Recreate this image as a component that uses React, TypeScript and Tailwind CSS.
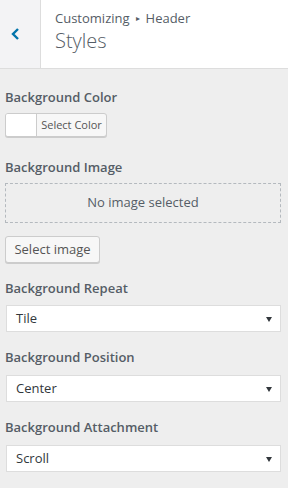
const font = { fontFamily: '"Open Sans", "Noto Sans", sans-serif' };

const Label = ({ children }: { children: React.ReactNode }) => (
  <div className="text-[13px] font-semibold leading-[18px] text-[#555d66]">{children}</div>
);

const SelectBox = ({ value }: { value: string }) => (
  <div className="flex h-[27px] w-[275px] items-center justify-between border border-[#ddd] bg-white pl-[9px] pr-[8px] text-[13px] text-[#32373c]">
    <span>{value}</span>
    <svg width="6" height="6" viewBox="0 0 6 6">
      <path d="M0 1h6L3 6z" fill="#32373c" />
    </svg>
  </div>
);

export default function App() {
  return (
    <div className="h-[488px] w-[288px] bg-[#eee]" style={font}>
      <div className="flex h-[69px] border-b border-[#ddd] bg-white">
        <div className="flex w-[41px] items-center border-r border-[#ddd] bg-[#f3f3f5] pl-[11px]">
          <svg width="9" height="12" viewBox="0 0 9 12">
            <path d="M7 1L2 6L7 11" stroke="#0073aa" strokeWidth="2.4" fill="none" />
          </svg>
        </div>
        <div className="flex flex-col pl-[14px] pt-[9px]">
          <div className="flex items-center text-[13px] leading-[18px] text-[#555d66]">
            <span>Customizing</span>
            <span className="mx-[6px] text-[8px]">▸</span>
            <span>Header</span>
          </div>
          <div className="text-[20px] font-light leading-[28px] text-[#555d66]">Styles</div>
        </div>
      </div>

      <div className="flex flex-col pl-[5px] pt-[19px]">
        <Label>Background Color</Label>
        <div className="mt-[7px] flex h-[24px] w-[102px] overflow-hidden rounded-[3px] border border-[#ccc] bg-[#f7f7f7] shadow-[0_1px_0_#ccc]">
          <div className="w-[31px] border-r border-[#ccc] bg-white" />
          <div className="flex flex-1 items-center justify-center text-[11px] text-[#555]">Select Color</div>
        </div>

        <div className="mt-[21px]">
          <Label>Background Image</Label>
        </div>
        <div className="mt-[7px] flex h-[40px] w-[276px] items-center justify-center border border-dashed border-[#b4b9be] text-[13px] text-[#555d66]">
          No image selected
        </div>
        <div className="mt-[13px] flex h-[27px] w-[95px] items-center justify-center rounded-[3px] border border-[#ccc] bg-[#f7f7f7] text-[13px] text-[#555] shadow-[0_1px_0_#ccc]">
          Select image
        </div>

        <div className="mt-[16px]">
          <Label>Background Repeat</Label>
        </div>
        <div className="mt-[8px] pl-[1px]">
          <SelectBox value="Tile" />
        </div>

        <div className="mt-[16px]">
          <Label>Background Position</Label>
        </div>
        <div className="mt-[9px] pl-[1px]">
          <SelectBox value="Center" />
        </div>

        <div className="mt-[16px]">
          <Label>Background Attachment</Label>
        </div>
        <div className="mt-[9px] pl-[1px]">
          <SelectBox value="Scroll" />
        </div>
      </div>
    </div>
  );
}
